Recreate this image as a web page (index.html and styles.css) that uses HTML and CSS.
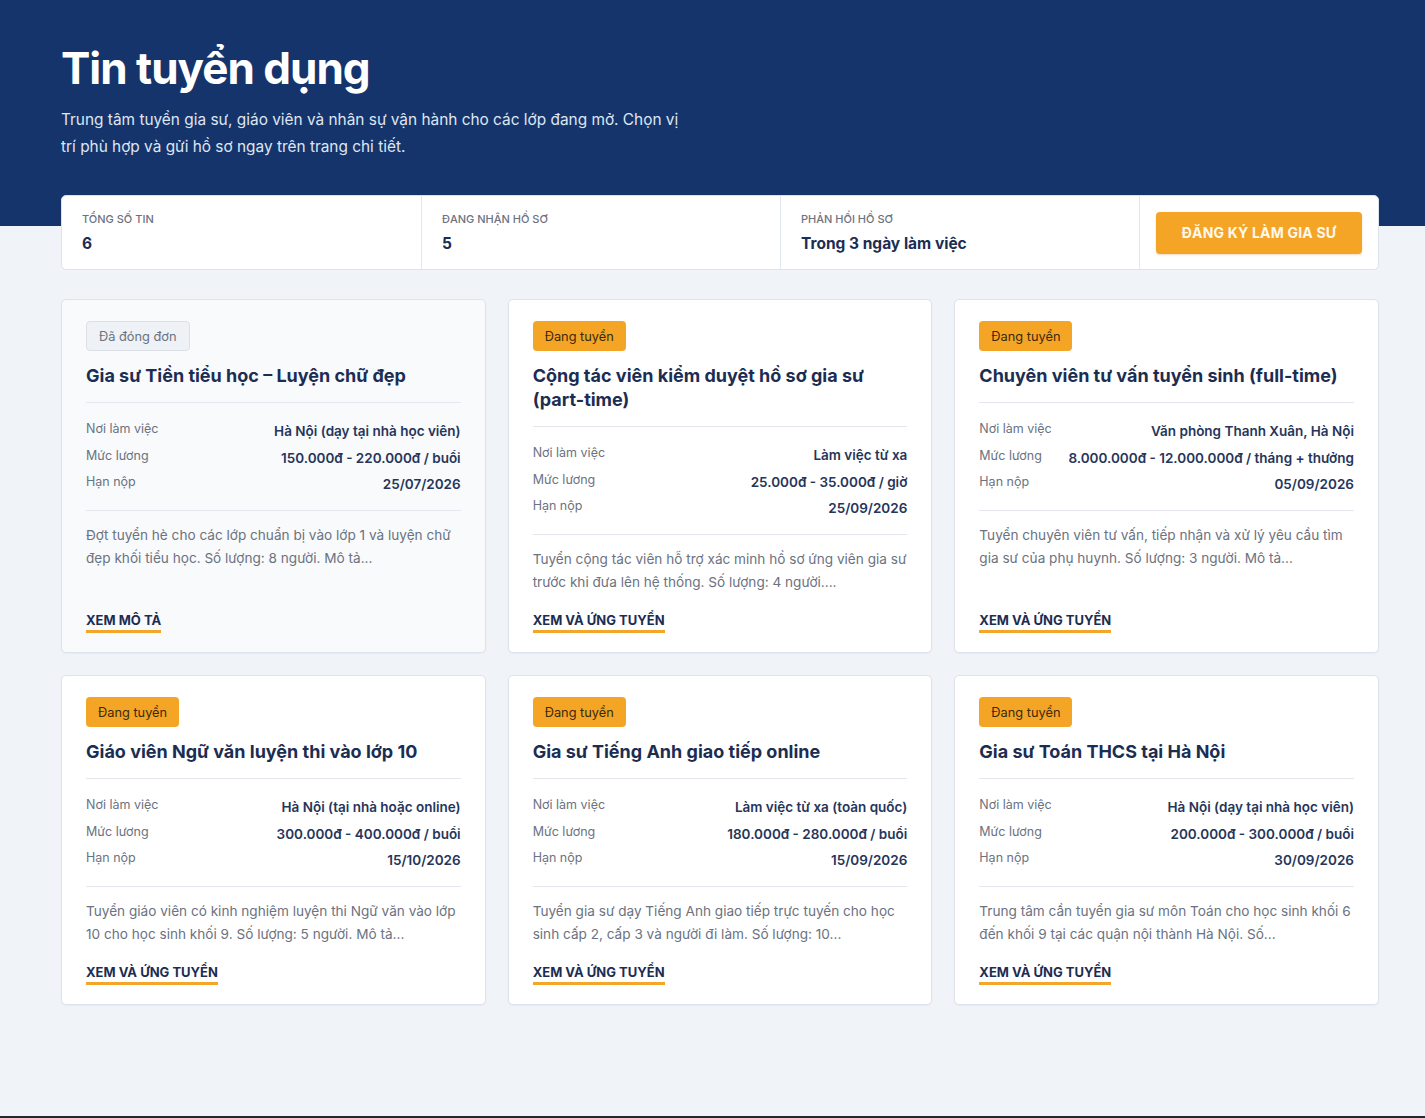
FILE: index.html
```html
<!DOCTYPE html>
<html lang="vi">
<head>
<meta charset="utf-8">
<title>Tin tuyển dụng</title>
<link rel="stylesheet" href="styles.css">
</head>
<body>
<header class="hero">
  <h1 class="hero-title">Tin tuyển dụng</h1>
  <p class="hero-sub">Trung tâm tuyển gia sư, giáo viên và nhân sự vận hành cho các lớp đang mở. Chọn vị trí phù hợp và gửi hồ sơ ngay trên trang chi tiết.</p>
</header>

<main class="main">
  <section class="stats">
    <div class="stat">
      <div class="stat-label">Tổng số tin</div>
      <div class="stat-value">6</div>
    </div>
    <div class="stat">
      <div class="stat-label">Đang nhận hồ sơ</div>
      <div class="stat-value">5</div>
    </div>
    <div class="stat">
      <div class="stat-label">Phản hồi hồ sơ</div>
      <div class="stat-value">Trong 3 ngày làm việc</div>
    </div>
    <div class="stat stat-action">
      <a class="btn-primary" href="#">Đăng ký làm gia sư</a>
    </div>
  </section>

  <section class="grid">
    <article class="card card-closed">
      <span class="badge badge-closed">Đã đóng đơn</span>
      <h2 class="card-title">Gia sư Tiền tiểu học – Luyện chữ đẹp</h2>
      <dl class="meta">
        <div class="meta-row"><dt>Nơi làm việc</dt><dd>Hà Nội (dạy tại nhà học viên)</dd></div>
        <div class="meta-row"><dt>Mức lương</dt><dd>150.000đ - 220.000đ / buổi</dd></div>
        <div class="meta-row"><dt>Hạn nộp</dt><dd>25/07/2026</dd></div>
      </dl>
      <p class="desc">Đợt tuyển hè cho các lớp chuẩn bị vào lớp 1 và luyện chữ đẹp khối tiểu học. Số lượng: 8 người. Mô tả...</p>
      <div class="card-foot"><a class="link" href="#">Xem mô tả</a></div>
    </article>

    <article class="card">
      <span class="badge">Đang tuyển</span>
      <h2 class="card-title">Cộng tác viên kiểm duyệt hồ sơ gia sư (part-time)</h2>
      <dl class="meta">
        <div class="meta-row"><dt>Nơi làm việc</dt><dd>Làm việc từ xa</dd></div>
        <div class="meta-row"><dt>Mức lương</dt><dd>25.000đ - 35.000đ / giờ</dd></div>
        <div class="meta-row"><dt>Hạn nộp</dt><dd>25/09/2026</dd></div>
      </dl>
      <p class="desc">Tuyển cộng tác viên hỗ trợ xác minh hồ sơ ứng viên gia sư trước khi đưa lên hệ thống. Số lượng: 4 người....</p>
      <div class="card-foot"><a class="link" href="#">Xem và ứng tuyển</a></div>
    </article>

    <article class="card">
      <span class="badge">Đang tuyển</span>
      <h2 class="card-title">Chuyên viên tư vấn tuyển sinh (full-time)</h2>
      <dl class="meta">
        <div class="meta-row"><dt>Nơi làm việc</dt><dd>Văn phòng Thanh Xuân, Hà Nội</dd></div>
        <div class="meta-row"><dt>Mức lương</dt><dd>8.000.000đ - 12.000.000đ / tháng + thưởng</dd></div>
        <div class="meta-row"><dt>Hạn nộp</dt><dd>05/09/2026</dd></div>
      </dl>
      <p class="desc">Tuyển chuyên viên tư vấn, tiếp nhận và xử lý yêu cầu tìm gia sư của phụ huynh. Số lượng: 3 người. Mô tả...</p>
      <div class="card-foot"><a class="link" href="#">Xem và ứng tuyển</a></div>
    </article>

    <article class="card">
      <span class="badge">Đang tuyển</span>
      <h2 class="card-title">Giáo viên Ngữ văn luyện thi vào lớp 10</h2>
      <dl class="meta">
        <div class="meta-row"><dt>Nơi làm việc</dt><dd>Hà Nội (tại nhà hoặc online)</dd></div>
        <div class="meta-row"><dt>Mức lương</dt><dd>300.000đ - 400.000đ / buổi</dd></div>
        <div class="meta-row"><dt>Hạn nộp</dt><dd>15/10/2026</dd></div>
      </dl>
      <p class="desc">Tuyển giáo viên có kinh nghiệm luyện thi Ngữ văn vào lớp 10 cho học sinh khối 9. Số lượng: 5 người. Mô tả...</p>
      <div class="card-foot"><a class="link" href="#">Xem và ứng tuyển</a></div>
    </article>

    <article class="card">
      <span class="badge">Đang tuyển</span>
      <h2 class="card-title">Gia sư Tiếng Anh giao tiếp online</h2>
      <dl class="meta">
        <div class="meta-row"><dt>Nơi làm việc</dt><dd>Làm việc từ xa (toàn quốc)</dd></div>
        <div class="meta-row"><dt>Mức lương</dt><dd>180.000đ - 280.000đ / buổi</dd></div>
        <div class="meta-row"><dt>Hạn nộp</dt><dd>15/09/2026</dd></div>
      </dl>
      <p class="desc">Tuyển gia sư dạy Tiếng Anh giao tiếp trực tuyến cho học sinh cấp 2, cấp 3 và người đi làm. Số lượng: 10...</p>
      <div class="card-foot"><a class="link" href="#">Xem và ứng tuyển</a></div>
    </article>

    <article class="card">
      <span class="badge">Đang tuyển</span>
      <h2 class="card-title">Gia sư Toán THCS tại Hà Nội</h2>
      <dl class="meta">
        <div class="meta-row"><dt>Nơi làm việc</dt><dd>Hà Nội (dạy tại nhà học viên)</dd></div>
        <div class="meta-row"><dt>Mức lương</dt><dd>200.000đ - 300.000đ / buổi</dd></div>
        <div class="meta-row"><dt>Hạn nộp</dt><dd>30/09/2026</dd></div>
      </dl>
      <p class="desc">Trung tâm cần tuyển gia sư môn Toán cho học sinh khối 6 đến khối 9 tại các quận nội thành Hà Nội. Số...</p>
      <div class="card-foot"><a class="link" href="#">Xem và ứng tuyển</a></div>
    </article>
  </section>
</main>
<footer class="footer"></footer>
</body>
</html>
```

FILE: styles.css
```css
* { box-sizing: border-box; }

body {
  margin: 0;
  background: #f0f3f8;
  font-family: "Inter", "Noto Sans", "DejaVu Sans", sans-serif;
  color: #1c2d52;
}

.hero {
  background: #16346c;
  padding: 40px 61px 66px;
}

.hero-title {
  margin: 0;
  font-size: 44px;
  line-height: 56px;
  font-weight: 700;
  color: #ffffff;
  letter-spacing: -1px;
}

.hero-sub {
  margin: 10px 0 0;
  max-width: 628px;
  font-size: 15.4px;
  line-height: 27px;
  color: #dfe6f2;
}

.main {
  width: 1318px;
  margin: -31px 0 0 61px;
  padding-bottom: 111px;
}

.stats {
  display: grid;
  grid-template-columns: 359px 359px 359px 1fr;
  background: #ffffff;
  border: 1px solid #dde3ec;
  border-radius: 5px;
  height: 75px;
}

.stat {
  padding: 15px 20px 0;
  border-left: 1px solid #e3e8ef;
}

.stat:first-child { border-left: none; }

.stat-label {
  font-size: 11px;
  line-height: 16px;
  font-weight: 500;
  text-transform: uppercase;
  color: #6b7280;
}

.stat-value {
  margin-top: 7px;
  font-size: 15.5px;
  line-height: 20px;
  font-weight: 700;
  color: #1c2d52;
}

.stat-action {
  display: flex;
  align-items: center;
  padding: 0 16px;
}

.btn-primary {
  display: flex;
  align-items: center;
  justify-content: center;
  width: 100%;
  height: 42px;
  background: #f4a526;
  border-radius: 4px;
  color: #fff8ec;
  font-size: 14px;
  font-weight: 700;
  text-transform: uppercase;
  text-decoration: none;
  letter-spacing: 0.2px;
  box-shadow: 0 1px 2px rgba(180, 110, 0, 0.25);
}

.grid {
  margin-top: 29px;
  display: grid;
  grid-template-columns: repeat(3, 1fr);
  gap: 22px;
}

.card {
  display: flex;
  flex-direction: column;
  align-items: flex-start;
  background: #ffffff;
  border: 1px solid #dde3ec;
  border-radius: 5px;
  padding: 21px 24px 19px;
  box-shadow: 0 1px 2px rgba(20, 40, 80, 0.04);
}

.card-closed { background: #f8fafc; }

.badge {
  display: inline-flex;
  align-items: center;
  height: 30px;
  padding: 0 12px;
  border-radius: 4px;
  background: #f4a526;
  color: #3a2a0c;
  font-size: 12.8px;
}

.badge-closed {
  background: #eef1f5;
  border: 1px solid #dbe0e7;
  color: #6b7280;
}

.card-title {
  align-self: stretch;
  margin: 13px 0 0;
  padding-bottom: 14px;
  border-bottom: 1px solid #e4e8ee;
  font-size: 18px;
  line-height: 24px;
  font-weight: 700;
  letter-spacing: 0;
  color: #1c2d52;
}

.meta {
  align-self: stretch;
  margin: 0;
  padding: 17px 0 15px;
  border-bottom: 1px solid #e4e8ee;
  display: flex;
  flex-direction: column;
  gap: 4.5px;
}

.meta-row {
  display: flex;
  justify-content: space-between;
  align-items: flex-start;
  gap: 12px;
}

.meta-row dt {
  flex: none;
  font-size: 12.5px;
  line-height: 18px;
  color: #6b7280;
}

.meta-row dd {
  margin: 0;
  text-align: right;
  font-size: 13.5px;
  line-height: 22px;
  font-weight: 600;
  color: #26355a;
}

.desc {
  margin: 13px 0 0;
  font-size: 13.6px;
  line-height: 23px;
  color: #6b7280;
}

.card-foot {
  margin-top: auto;
  padding-top: 15px;
}

.link {
  display: inline-block;
  font-size: 13px;
  line-height: 20px;
  font-weight: 700;
  text-transform: uppercase;
  text-decoration: none;
  color: #1c2d52;
  border-bottom: 3px solid #f2a72b;
}

.footer {
  height: 40px;
  background: #1f2937;
}
```
